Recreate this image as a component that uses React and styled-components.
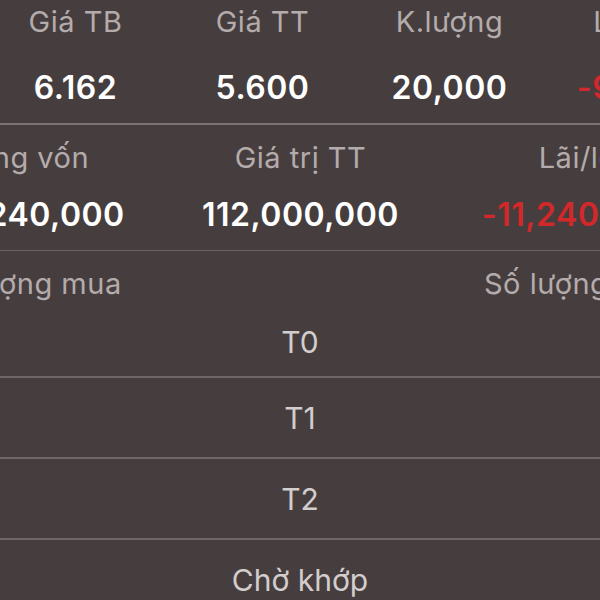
import styled, { createGlobalStyle } from "styled-components";

const GlobalStyle = createGlobalStyle`
  html, body {
    margin: 0;
    padding: 0;
    background: #463e3e;
  }
  body {
    font-family: Inter, "Noto Sans", "Liberation Sans", sans-serif;
    -webkit-font-smoothing: antialiased;
  }
`;

const Screen = styled.div`
  width: 600px;
  height: 600px;
  overflow: hidden;
  background: #463e3e;
`;

// each block is wider than the crop, it is a piece of a bigger phone screen
const Section = styled.section`
  display: grid;
  grid-template-columns: ${(p) => p.$columns};
  width: max-content;
  margin-left: ${(p) => p.$offset}px;
  padding-bottom: ${(p) => p.$pb || 0}px;
`;

const FullLine = styled.div`
  width: 600px;
  height: ${(p) => p.$h}px;
  background: ${(p) => p.$color};
`;

const Cell = styled.div`
  display: flex;
  flex-direction: column;
  align-items: center;
  white-space: nowrap;
`;

const Label = styled.span`
  font-size: 29px;
  font-weight: 400;
  letter-spacing: 0.5px;
  color: #b4acac;
  line-height: ${(p) => p.$lh}px;
  padding-top: ${(p) => p.$pt || 0}px;
`;

const Value = styled.span`
  font-size: 32px;
  font-weight: 600;
  letter-spacing: 0.5px;
  color: ${(p) => (p.$down ? "#d2282b" : "#ffffff")};
  line-height: 44px;
  margin-top: ${(p) => p.$mt}px;
`;

const List = styled.ul`
  list-style: none;
  margin: 0;
  padding: 0;
  width: 600px;
`;

const ListItem = styled.li`
  text-align: center;
  font-size: 30px;
  color: #d3cdcd;
  line-height: 50px;
  padding: 15px 0 ${(p) => (p.$first ? 9 : 14)}px;
  border-top: ${(p) => (p.$first ? "none" : "2px solid #706767")};
`;

const topStats = [
  { label: "Giá TB", value: "6.162" },
  { label: "Giá TT", value: "5.600" },
  { label: "K.lượng", value: "20,000" },
  { label: "Lãi/lỗ", value: "-9.12%", down: true },
];

const totals = [
  { label: "Tổng vốn", value: "123,240,000" },
  { label: "Giá trị TT", value: "112,000,000" },
  { label: "Lãi/lỗ", value: "-11,240,000", down: true },
];

const settlements = ["T0", "T1", "T2", "Chờ khớp"];

export default function App() {
  return (
    <Screen>
      <GlobalStyle />
      <Section $columns="repeat(3, 187px) 178px" $offset={-18} $pb={13}>
        {topStats.map((s) => (
          <Cell key={s.label}>
            <Label $lh={44}>{s.label}</Label>
            <Value $mt={22} $down={s.down}>
              {s.value}
            </Value>
          </Cell>
        ))}
      </Section>
      <FullLine $h={2} $color="#7c7373" />
      <Section $columns="repeat(3, 277px)" $offset={-115} $pb={13}>
        {totals.map((s) => (
          <Cell key={s.label}>
            <Label $lh={44} $pt={11}>
              {s.label}
            </Label>
            <Value $mt={13} $down={s.down}>
              {s.value}
            </Value>
          </Cell>
        ))}
      </Section>
      <FullLine $h={1} $color="#6b6262" />
      <Section $columns="repeat(2, 552px)" $offset={-251}>
        <Cell>
          <Label $lh={36} $pt={15}>
            Số lượng mua
          </Label>
        </Cell>
        <Cell>
          <Label $lh={36} $pt={15}>
            Số lượng bán
          </Label>
        </Cell>
      </Section>
      <List>
        {settlements.map((t, i) => (
          <ListItem key={t} $first={i === 0}>
            {t}
          </ListItem>
        ))}
      </List>
    </Screen>
  );
}
